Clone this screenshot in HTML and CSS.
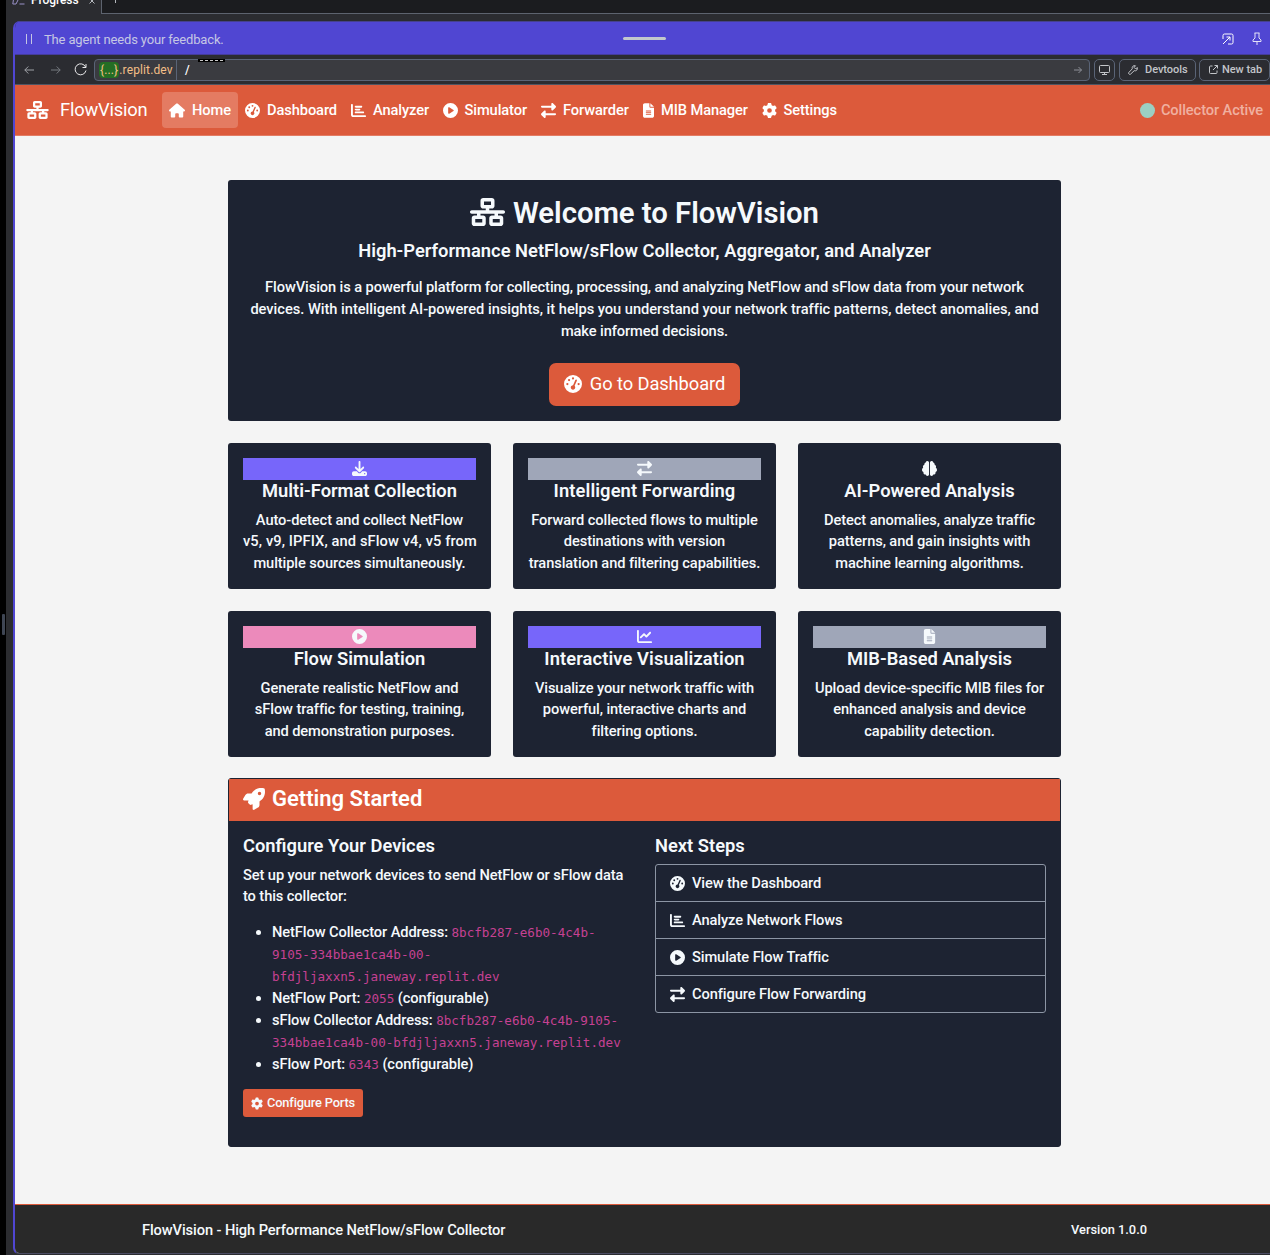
FILE: index.html
```html
<!DOCTYPE html>
<html lang="en">
<head>
<meta charset="utf-8">
<title>FlowVision</title>
<link rel="stylesheet" href="styles.css">
</head>
<body>
<svg class="defs" width="0" height="0" aria-hidden="true">
  <symbol id="network" viewBox="0 0 640 512"><path d="M256 64H384v64H256V64zM240 0c-26.5 0-48 21.5-48 48v96c0 26.5 21.5 48 48 48h48v32H32c-17.7 0-32 14.3-32 32s14.3 32 32 32h96v32H80c-26.5 0-48 21.5-48 48v96c0 26.5 21.5 48 48 48H240c26.5 0 48-21.5 48-48V368c0-26.5-21.5-48-48-48H192V288H448v32H400c-26.5 0-48 21.5-48 48v96c0 26.5 21.5 48 48 48H560c26.5 0 48-21.5 48-48V368c0-26.5-21.5-48-48-48H512V288h96c17.7 0 32-14.3 32-32s-14.3-32-32-32H352V192h48c26.5 0 48-21.5 48-48V48c0-26.5-21.5-48-48-48H240zM96 448V384H224v64H96zm320-64H544v64H416V384z"/></symbol>
  <symbol id="home" viewBox="0 0 576 512"><path d="M575.8 255.5c0 18-15 32.1-32 32.1h-32l.7 160.2c0 2.7-.2 5.4-.5 8.1V472c0 22.1-17.9 40-40 40H392c-22.1 0-40-17.9-40-40V384c0-17.7-14.3-32-32-32H256c-17.7 0-32 14.3-32 32v88c0 22.1-17.9 40-40 40H104c-22.1 0-40-17.9-40-40V287.6H32c-18 0-32-14-32-32.1c0-9 3-17 10-24L266.4 8c7-7 15-8 22-8s15 2 21 7L564.8 231.5c8 7 12 15 11 24z"/></symbol>
  <symbol id="gauge" viewBox="0 0 512 512"><path d="M0 256a256 256 0 1 1 512 0A256 256 0 1 1 0 256zM288 96a32 32 0 1 0-64 0 32 32 0 1 0 64 0zM256 416c35.3 0 64-28.7 64-64c0-17.4-6.9-33.1-18.1-44.6L366 161.7c5.3-12.1-.2-26.3-12.3-31.6s-26.3 .2-31.6 12.3L257.9 288c-.6 0-1.3 0-1.9 0c-35.3 0-64 28.7-64 64s28.7 64 64 64zM176 144a32 32 0 1 0-64 0 32 32 0 1 0 64 0zM96 288a32 32 0 1 0 0-64 32 32 0 1 0 0 64zm352-32a32 32 0 1 0-64 0 32 32 0 1 0 64 0z"/></symbol>
  <symbol id="bars" viewBox="0 0 512 512"><path d="M32 32c17.7 0 32 14.3 32 32V400c0 8.8 7.2 16 16 16H480c17.7 0 32 14.3 32 32s-14.3 32-32 32H80c-44.2 0-80-35.8-80-80V64C0 46.3 14.3 32 32 32zm96 96c0-17.7 14.3-32 32-32l192 0c17.7 0 32 14.3 32 32s-14.3 32-32 32l-192 0c-17.7 0-32-14.3-32-32zm32 64H288c17.7 0 32 14.3 32 32s-14.3 32-32 32H160c-17.7 0-32-14.3-32-32s14.3-32 32-32zm0 96H416c17.7 0 32 14.3 32 32s-14.3 32-32 32H160c-17.7 0-32-14.3-32-32s14.3-32 32-32z"/></symbol>
  <symbol id="play" viewBox="0 0 512 512"><path d="M0 256a256 256 0 1 1 512 0A256 256 0 1 1 0 256zM188.3 147.1c-7.6 4.2-12.3 12.3-12.3 20.9V344c0 8.7 4.7 16.7 12.3 20.9s16.8 4.1 24.3-.5l144-88c7.1-4.4 11.5-12.1 11.5-20.5s-4.4-16.1-11.5-20.5l-144-88c-7.4-4.5-16.7-4.7-24.3-.5z"/></symbol>
  <symbol id="exchange" viewBox="0 0 512 512"><path d="M32 96l320 0V32c0-12.9 7.8-24.6 19.8-29.6s25.7-2.2 34.9 6.9l96 96c6 6 9.4 14.1 9.4 22.6s-3.4 16.6-9.4 22.6l-96 96c-9.2 9.2-22.9 11.9-34.9 6.9s-19.8-16.6-19.8-29.6V160L32 160c-17.7 0-32-14.3-32-32s14.3-32 32-32zM480 352c17.7 0 32 14.3 32 32s-14.3 32-32 32H160v64c0 12.9-7.8 24.6-19.8 29.6s-25.7 2.2-34.9-6.9l-96-96c-6-6-9.4-14.1-9.4-22.6s3.4-16.6 9.4-22.6l96-96c9.2-9.2 22.9-11.9 34.9-6.9s19.8 16.6 19.8 29.6l0 64H480z"/></symbol>
  <symbol id="file" viewBox="0 0 384 512"><path d="M64 0C28.7 0 0 28.7 0 64V448c0 35.3 28.7 64 64 64H320c35.3 0 64-28.7 64-64V160H256c-17.7 0-32-14.3-32-32V0H64zM256 0V128H384L256 0zM112 256H272c8.8 0 16 7.2 16 16s-7.2 16-16 16H112c-8.8 0-16-7.2-16-16s7.2-16 16-16zm0 64H272c8.8 0 16 7.2 16 16s-7.2 16-16 16H112c-8.8 0-16-7.2-16-16s7.2-16 16-16zm0 64H272c8.8 0 16 7.2 16 16s-7.2 16-16 16H112c-8.8 0-16-7.2-16-16s7.2-16 16-16z"/></symbol>
  <symbol id="gear" viewBox="0 0 512 512"><path d="M495.9 166.6c3.2 8.7 .5 18.4-6.4 24.6l-43.3 39.4c1.1 8.3 1.7 16.8 1.7 25.4s-.6 17.1-1.7 25.4l43.3 39.4c6.9 6.2 9.6 15.9 6.4 24.6c-4.4 11.9-9.7 23.3-15.8 34.3l-4.7 8.1c-6.6 11-14 21.4-22.1 31.2c-5.9 7.2-15.7 9.6-24.5 6.8l-55.7-17.7c-13.4 10.3-28.2 18.9-44 25.4l-12.5 57.1c-2 9.1-9 16.3-18.2 17.8c-13.8 2.3-28 3.5-42.5 3.5s-28.7-1.2-42.5-3.5c-9.2-1.5-16.2-8.7-18.2-17.8l-12.5-57.1c-15.8-6.5-30.6-15.1-44-25.4L83.1 425.9c-8.8 2.8-18.6 .3-24.5-6.8c-8.1-9.8-15.5-20.2-22.1-31.2l-4.7-8.1c-6.1-11-11.4-22.4-15.8-34.3c-3.2-8.7-.5-18.4 6.4-24.6l43.3-39.4C64.6 273.1 64 264.6 64 256s.6-17.1 1.7-25.4L22.4 191.2c-6.9-6.2-9.6-15.9-6.4-24.6c4.4-11.9 9.7-23.3 15.8-34.3l4.7-8.1c6.6-11 14-21.4 22.1-31.2c5.9-7.2 15.7-9.6 24.5-6.8l55.7 17.7c13.4-10.3 28.2-18.9 44-25.4l12.5-57.1c2-9.1 9-16.3 18.2-17.8C227.3 1.2 241.5 0 256 0s28.7 1.2 42.5 3.5c9.2 1.5 16.2 8.7 18.2 17.8l12.5 57.1c15.8 6.5 30.6 15.1 44 25.4l55.7-17.7c8.8-2.8 18.6-.3 24.5 6.8c8.1 9.8 15.5 20.2 22.1 31.2l4.7 8.1c6.1 11 11.4 22.4 15.8 34.3zM256 336a80 80 0 1 0 0-160 80 80 0 1 0 0 160z"/></symbol>
  <symbol id="download" viewBox="0 0 512 512"><path d="M288 32c0-17.7-14.3-32-32-32s-32 14.3-32 32V274.7l-73.4-73.4c-12.5-12.5-32.8-12.5-45.3 0s-12.5 32.8 0 45.3l128 128c12.5 12.5 32.8 12.5 45.3 0l128-128c12.5-12.5 12.5-32.8 0-45.3s-32.8-12.5-45.3 0L288 274.7V32zM64 352c-35.3 0-64 28.7-64 64v32c0 35.3 28.7 64 64 64H448c35.3 0 64-28.7 64-64V416c0-35.3-28.7-64-64-64H346.5l-45.3 45.3c-25 25-65.5 25-90.5 0L165.5 352H64zm368 56a24 24 0 1 1 0 48 24 24 0 1 1 0-48z"/></symbol>
  <symbol id="brain" viewBox="0 0 512 512"><path d="M184 0c30.9 0 56 25.1 56 56V456c0 30.9-25.1 56-56 56c-28.9 0-52.7-21.9-55.7-50.1c-5.2 1.4-10.7 2.1-16.3 2.1c-35.3 0-64-28.7-64-64c0-7.4 1.3-14.6 3.6-21.2C21.4 367.4 0 338.2 0 304c0-31.9 18.7-59.5 45.8-72.3C37.1 220.8 32 207 32 192c0-30.7 21.6-56.3 50.4-62.6C80.8 123.9 80 118 80 112c0-29.9 20.6-55.1 48.3-62.1C131.3 21.9 155.1 0 184 0zM328 0c28.9 0 52.6 21.9 55.7 49.9c27.8 7 48.3 32.1 48.3 62.1c0 6-.8 11.9-2.4 17.4c28.8 6.2 50.4 31.9 50.4 62.6c0 15-5.1 28.8-13.8 39.7C493.3 244.5 512 272.1 512 304c0 34.2-21.4 63.4-51.6 74.8c2.3 6.6 3.6 13.8 3.6 21.2c0 35.3-28.7 64-64 64c-5.6 0-11.1-.7-16.3-2.1c-3 28.2-26.8 50.1-55.7 50.1c-30.9 0-56-25.1-56-56V56c0-30.9 25.1-56 56-56z"/></symbol>
  <symbol id="line" viewBox="0 0 512 512"><path d="M64 64c0-17.7-14.3-32-32-32S0 46.3 0 64V400c0 44.2 35.8 80 80 80H480c17.7 0 32-14.3 32-32s-14.3-32-32-32H80c-8.8 0-16-7.2-16-16V64zm406.6 86.6c12.5-12.5 12.5-32.8 0-45.3s-32.8-12.5-45.3 0L320 210.7l-57.4-57.4c-12.5-12.5-32.8-12.5-45.3 0l-112 112c-12.5 12.5-12.5 32.8 0 45.3s32.8 12.5 45.3 0L240 221.3l57.4 57.4c12.5 12.5 32.8 12.5 45.3 0l128-128z"/></symbol>
  <symbol id="rocket" viewBox="0 0 512 512"><path d="M156.6 384.9L125.7 354c-8.5-8.5-11.5-20.8-7.7-32.2c3-8.9 7-20.5 11.8-33.8L24 288c-8.6 0-16.6-4.6-20.9-12.1s-4.2-16.7 .2-24.1l52.5-88.5c13-21.9 36.5-35.3 61.9-35.3l82.3 0c2.4-4 4.8-7.7 7.2-11.3C289.1-4.1 411.1-8.1 483.9 5.3c11.6 2.1 20.6 11.2 22.8 22.8c13.4 72.9 9.3 194.8-111.4 276.7c-3.5 2.4-7.3 4.8-11.3 7.2v82.3c0 25.4-13.4 49-35.3 61.9l-88.5 52.5c-7.4 4.4-16.6 4.5-24.1 .2s-12.1-12.2-12.1-20.9V380.8c-14.1 4.9-26.4 8.9-35.7 11.9c-11.2 3.6-23.4 .5-31.8-7.8zM384 168a40 40 0 1 0 0-80 40 40 0 1 0 0 80z"/></symbol>
</svg>
<div class="shell">
  <div class="edge"><span class="grip"></span></div>
  <div class="workspace">
    <div class="tabs">
      <div class="tab">
        <svg class="stroke" width="13" height="12" viewBox="0 0 13 12"><path d="M2 3 .8 11H4M2 3l4 4-2 4M7.500 11h5"/></svg>
        <span>Progress</span>
        <svg class="stroke close" width="6" height="6" viewBox="0 0 6 6"><path d="m.5.500 5 5m0-5-5 5"/></svg>
      </div>
      <svg class="stroke plus" width="7" height="8" viewBox="0 0 7 8"><path d="M3.500 0v8M0 3.500h7"/></svg>
    </div>
    <div class="pane">
      <div class="agent">
        <svg class="stroke" width="8" height="10" viewBox="0 0 8 10"><path d="M1.500 0v10M6.500 0v10"/></svg>
        <span class="agent-text">The agent needs your feedback.</span>
        <span class="handle"></span>
        <svg class="stroke open" width="12" height="12" viewBox="0 0 12 12"><path d="M1 6V2.500Q1 1 2.500 1h7Q11 1 11 2.500v7q0 1.500-1.500 1.500H6M1 11l7-7M4.500 4H8v3.500"/></svg>
        <svg class="stroke pin" width="10" height="14" viewBox="0 0 10 14"><path d="M2.500 1h5M3 1v5L1 8v1.500h8V8L7 6V1M5 9.500V13"/></svg>
      </div>
      <div class="address">
        <svg class="stroke back" width="10" height="8" viewBox="0 0 10 8"><path d="M10 4H.8M4.300.500.8 4l3.500 3.500"/></svg>
        <svg class="stroke fwd" width="10" height="8" viewBox="0 0 10 8"><path d="M0 4h9.200M5.700.500 9.200 4 5.700 7.500"/></svg>
        <svg class="stroke reload" width="13" height="13" viewBox="0 0 13 13"><path d="M12 1v3.500H8.500M11.700 4.200A5.500 5.500 0 1 0 12 7.500"/></svg>
        <div class="url">
          <span class="host"><b>{...}</b>.replit.dev</span><span class="path">/</span>
          <svg class="stroke go" width="8" height="8" viewBox="0 0 8 8"><path d="M0 4h7.500M4.500 1l3 3-3 3"/></svg>
          <i class="smudge"></i>
        </div>
        <div class="tool device"><svg class="stroke" width="11" height="10" viewBox="0 0 11 10"><rect x=".5" y=".5" width="10" height="7" rx="1"/><path d="M5.500 7.500v2M3 9.500h5"/></svg></div>
        <div class="tool devtools"><svg class="stroke" width="10" height="10" viewBox="0 0 10 10"><path d="M9.200 2.500 7.700 4 6 2.300 7.500.8C5.500 0 3.600 1.800 4.300 3.800L.8 7.500c-.8 1 .7 2.400 1.700 1.700L6.200 5.700c2 .7 3.800-1.200 3-3.200z"/></svg><span>Devtools</span></div>
        <div class="tool newtab"><svg class="stroke" width="9" height="9" viewBox="0 0 9 9"><path d="M3.500 1H1.500q-1 0-1 1v5.500q0 1 1 1H7q1 0 1-1v-2M5.500.500h3v3M8.500.500 4 5"/></svg><span>New tab</span></div>
      </div>
      <div class="site">
        <nav class="navbar">
          <div class="brand"><svg><use href="#network"/></svg><span>FlowVision</span></div>
          <div class="link active" style="width:76px"><svg class="w-home"><use href="#home"/></svg><span>Home</span></div>
          <div class="link" style="width:106px"><svg><use href="#gauge"/></svg><span>Dashboard</span></div>
          <div class="link" style="width:91.500px"><svg><use href="#bars"/></svg><span>Analyzer</span></div>
          <div class="link" style="width:98.500px"><svg><use href="#play"/></svg><span>Simulator</span></div>
          <div class="link" style="width:102px"><svg><use href="#exchange"/></svg><span>Forwarder</span></div>
          <div class="link" style="width:118.500px"><svg class="w-file"><use href="#file"/></svg><span>MIB Manager</span></div>
          <div class="link" style="width:90px"><svg><use href="#gear"/></svg><span>Settings</span></div>
          <div class="status"><i></i><span>Collector Active</span></div>
        </nav>
        <main>
          <section class="card hero">
            <h1><svg><use href="#network"/></svg><span>Welcome to FlowVision</span></h1>
            <h4>High-Performance NetFlow/sFlow Collector, Aggregator, and Analyzer</h4>
            <p>FlowVision is a powerful platform for collecting, processing, and analyzing NetFlow and sFlow data from your network<br><span class="loose">devices. With intelligent AI-powered insights, it helps you understand your network traffic patterns, detect anomalies, and</span><br>make informed decisions.</p>
            <a class="cta"><svg><use href="#gauge"/></svg><span>Go to Dashboard</span></a>
          </section>
          <section class="features">
            <div class="card feature"><div class="band violet"><svg><use href="#download"/></svg></div><h4>Multi-Format Collection</h4><p>Auto-detect and collect NetFlow<br><span class="looser">v5, v9, IPFIX, and sFlow v4, v5 from</span><br>multiple sources simultaneously.</p></div>
            <div class="card feature"><div class="band slate"><svg><use href="#exchange"/></svg></div><h4 class="looser">Intelligent Forwarding</h4><p>Forward collected flows to multiple<br>destinations with version<br>translation and filtering capabilities.</p></div>
            <div class="card feature"><div class="band"><svg><use href="#brain"/></svg></div><h4>AI-Powered Analysis</h4><p>Detect anomalies, analyze traffic<br>patterns, and gain insights with<br>machine learning algorithms.</p></div>
            <div class="card feature"><div class="band pink"><svg><use href="#play"/></svg></div><h4>Flow Simulation</h4><p>Generate realistic NetFlow and<br>sFlow traffic for testing, training,<br>and demonstration purposes.</p></div>
            <div class="card feature"><div class="band violet"><svg><use href="#line"/></svg></div><h4 class="looser">Interactive Visualization</h4><p>Visualize your network traffic with<br>powerful, interactive charts and<br>filtering options.</p></div>
            <div class="card feature"><div class="band slate"><svg><use href="#file"/></svg></div><h4>MIB-Based Analysis</h4><p>Upload device-specific MIB files for<br>enhanced analysis and device<br>capability detection.</p></div>
          </section>
          <section class="card start">
            <header><svg><use href="#rocket"/></svg><h3>Getting Started</h3></header>
            <div class="columns">
              <div class="col">
                <h4>Configure Your Devices</h4>
                <p>Set up your network devices to send NetFlow or sFlow data<br>to this collector:</p>
                <ul>
                  <li>NetFlow Collector Address: <code>8bcfb287-e6b0-4c4b-<br>9105-334bbae1ca4b-00-<br>bfdjljaxxn5.janeway.replit.dev</code></li>
                  <li>NetFlow Port: <code>2055</code> (configurable)</li>
                  <li>sFlow Collector Address: <code>8bcfb287-e6b0-4c4b-9105-<br>334bbae1ca4b-00-bfdjljaxxn5.janeway.replit.dev</code></li>
                  <li>sFlow Port: <code>6343</code> (configurable)</li>
                </ul>
                <a class="ports"><svg><use href="#gear"/></svg><span>Configure Ports</span></a>
              </div>
              <div class="col">
                <h4>Next Steps</h4>
                <div class="steps">
                  <a><svg><use href="#gauge"/></svg><span>View the Dashboard</span></a>
                  <a><svg><use href="#bars"/></svg><span>Analyze Network Flows</span></a>
                  <a><svg><use href="#play"/></svg><span>Simulate Flow Traffic</span></a>
                  <a><svg><use href="#exchange"/></svg><span>Configure Flow Forwarding</span></a>
                </div>
              </div>
            </div>
          </section>
        </main>
        <footer><span>FlowVision - High Performance NetFlow/sFlow Collector</span><span class="version">Version 1.0.0</span></footer>
      </div>
    </div>
  </div>
</div>
</body>
</html>
```
FILE: styles.css
```css
* { box-sizing: border-box; }
body {
  margin: 0;
  width: 1270px;
  height: 1255px;
  overflow: hidden;
  background: #2b2c30;
  font: 480 14.667px/22px Roboto, "Noto Sans", sans-serif;
  letter-spacing: -0.1px;
  color: #f5f9fc;
  white-space: nowrap;
}
h1, h3, h4, p, ul { margin: 0; }
h1, h3, h4 { font-weight: 600; letter-spacing: 0; }
svg { flex: none; fill: currentColor; }
.defs { position: absolute; }
.stroke { fill: none; stroke: currentColor; stroke-width: 1; }
.loose { letter-spacing: -0.03px; }
.looser { letter-spacing: .1px; }

.shell { display: flex; height: 1255px; }
.edge { flex: none; width: 6px; background: #000; display: flex; align-items: center; justify-content: flex-end; }
.grip { width: 3px; height: 21px; margin: 0 1px 6px 0; border-radius: 1px; background: #3f4654; }
.workspace { flex: 1; min-width: 0; }
.tabs { height: 14px; display: flex; background: #1b1c1f; border-bottom: 1px solid #5d636e; }
.tab {
  width: 96px;
  height: 14px;
  padding-left: 6px;
  display: flex;
  align-items: flex-end;
  gap: 6px;
  background: #2b2c30;
  border-right: 1px solid #5d636e;
  color: #fff;
  font-size: 12px;
}
.tab svg { color: #9a91c8; margin-bottom: 9px; }
.tab span { line-height: 14px; margin-bottom: 7px; }
.tab .close { margin: 0 0 10px 5px; color: #b5b8bd; }
.plus { color: #b5b8bd; margin: -5px 0 0 10px; }

.pane {
  margin: 7px 0 0 7px;
  height: 1233px;
  border-left: 2px solid #5046d2;
  border-bottom: 1px solid #4b4c63;
  border-radius: 7px 0 0 6px;
  overflow: hidden;
}
.agent {
  height: 34px;
  padding: 2px 8px 0 10px;
  display: flex;
  align-items: center;
  background: #5046d2;
  border-top: 1px solid #46418f;
  border-bottom: 1px solid #443c9c;
  color: #c5c6e4;
  font-size: 13px;
}
.agent-text { flex: none; width: 590px; padding: 1px 0 0 11px; font-weight: 400; letter-spacing: -0.15px; }
.handle { width: 43px; height: 3px; margin-bottom: 2px; border-radius: 2px; background: #c2c8cc; }
.open { margin-left: auto; color: #fff; }
.pin { margin-left: 18px; color: #e4e2f8; }
.address {
  height: 30px;
  padding-left: 9px;
  display: flex;
  align-items: center;
  background: #2b2c31;
  border-bottom: 1px solid #4e5563;
  font-size: 12px;
}
.back { color: #9fa2a7; }
.fwd { margin-left: 17px; color: #777a80; }
.reload { margin-left: 13px; color: #e8e8ea; }
.url {
  position: relative;
  flex: none;
  width: 996px;
  height: 22px;
  margin-left: 7px;
  display: flex;
  align-items: center;
  background: #3a3b40;
  border: 1px solid #5a6477;
  border-radius: 4px;
}
.host { width: 82px; padding-left: 4px; height: 20px; line-height: 20px; border-right: 1px solid #5a6477; color: #f3bf87; font-weight: 400; letter-spacing: .13px; }
.host b { font-weight: 400; background: #246e24; border-radius: 4px; padding: 1px 1px; line-height: 15px; }
.path { padding-left: 8px; color: #fff; }
.go { margin: 0 7px 0 auto; color: #8d9097; }
.smudge { position: absolute; left: 103px; top: -1px; width: 27px; height: 3px; background: #000; }
.smudge::after { content: ""; display: block; margin: 1px 2px; border-top: 1px dashed #c8c8c8; }
.tool {
  flex: none;
  height: 22px;
  display: flex;
  align-items: center;
  border: 1px solid #5a6477;
  border-radius: 5px;
  color: #c3c5c9;
  font-size: 11px;
  font-weight: 500;
  letter-spacing: -0.05px;
}
.device { width: 21px; margin-left: 4px; padding-left: 4px; }
.devtools { width: 77px; margin-left: 4px; padding-left: 8px; gap: 7px; }
.newtab { width: 71px; margin-left: 3px; padding-left: 9px; gap: 4px; }

.site { height: 1168px; background: #f4f4f4; display: flex; flex-direction: column; }
.navbar { height: 51px; padding: 0 7px 0 11px; display: flex; align-items: center; background: #dc5a3b; border-bottom: 1px solid #e37c64; color: #fff; }
.brand { width: 136px; display: flex; align-items: center; gap: 11px; font-size: 18.333px; font-weight: 420; letter-spacing: -0.2px; }
.brand svg { width: 23px; height: 18px; }
.link { height: 36px; padding-left: 7px; display: flex; align-items: center; gap: 7px; border-radius: 4px; }
.active { background: #e47b62; }
.link svg { width: 15px; height: 15px; }
.link .w-home { width: 16px; }
.link .w-file { width: 11px; }
.status { margin-left: auto; display: flex; align-items: center; gap: 6px; color: #f0b0a0; }
.status i { width: 15px; height: 15px; border-radius: 50%; background: #9bcfc3; }

main { width: 833px; margin: 44px 0 0 213px; display: flex; flex-direction: column; gap: 22px; }
.card { background: #1d2332; border-radius: 3px; }
.hero { height: 241px; display: flex; flex-direction: column; align-items: center; text-align: center; }
.hero h1 { display: flex; align-items: center; gap: 8px; margin-top: 15px; font-size: 29.333px; line-height: 36px; letter-spacing: -0.05px; }
.hero h1 svg { width: 35px; height: 28px; margin-top: -3px; }
.hero h4 { margin-top: 9px; }
h4 { font-size: 18.333px; line-height: 22px; }
.hero p { margin-top: 14px; }
.cta { width: 191px; height: 43px; margin-top: 21px; padding-bottom: 1px; display: flex; align-items: center; justify-content: center; gap: 8px; background: #dc5a3b; border-radius: 7px; font-size: 18.333px; font-weight: 450; color: #fff; }
.cta svg { width: 18px; height: 18px; }
.features { display: grid; grid-template-columns: repeat(3, 263px); gap: 22px; margin-bottom: -1px; }
.feature { height: 146px; padding: 15px; text-align: center; }
.band { height: 22px; padding-bottom: 1px; display: flex; align-items: center; justify-content: center; }
.band svg { width: 15px; height: 15px; }
.violet { background: #7766fa; }
.slate { background: #9fa6b8; }
.pink { background: #ec8abb; }
.feature p { margin-top: 7.500px; line-height: 21.700px; }
.start { height: 369px; border: 1px solid #1d2332; }
.start header { height: 42px; padding: 0 14px 3px; display: flex; align-items: center; gap: 7px; background: #dc5a3b; color: #fff; }
.start header svg { width: 22px; height: 22px; }
h3 { font-size: 22px; }
.columns { display: grid; grid-template-columns: 390px 391px; gap: 22px; padding: 14px; }
.col p { margin-top: 8px; line-height: 21px; }
ul { margin-top: 14px; padding-left: 29px; }
code { font: 12.600px "DejaVu Sans Mono", monospace; letter-spacing: 0; color: #c64192; }
.ports { width: 120px; height: 28px; margin-top: 14px; display: flex; align-items: center; justify-content: center; gap: 4px; background: #dc5a3b; border-radius: 3px; font-size: 12.833px; letter-spacing: -0.18px; }
.ports svg { width: 12px; height: 13px; }
.steps { margin-top: 7px; border: 1px solid #8c95a4; border-radius: 3px; }
.steps a { height: 37px; padding-left: 14px; display: flex; align-items: center; gap: 7px; border-top: 1px solid #8c95a4; }
.steps a:first-child { height: 36px; border-top: 0; }
.steps svg { width: 15px; height: 15px; }
footer { height: 49px; margin-top: auto; padding: 2px 123px 0 127px; display: flex; align-items: center; justify-content: space-between; background: #292929; border-top: 1px solid #dc5a3b; }
.version { font-size: 12.833px; letter-spacing: 0; }
```
